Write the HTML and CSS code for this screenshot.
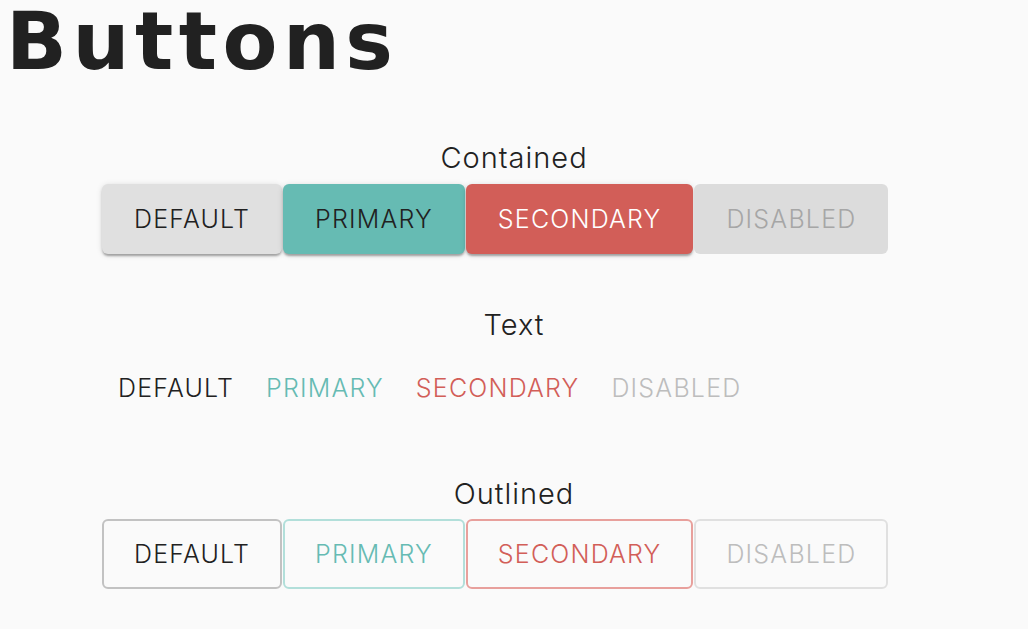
FILE: index.html
```html
<!DOCTYPE html>
<html>
<head>
<meta charset="utf-8">
<link rel="stylesheet" href="styles.css">
</head>
<body>
<h1 class="title">Buttons</h1>

<section class="group group-contained">
  <h2 class="label">Contained</h2>
  <div class="row">
    <button class="btn contained default">Default</button>
    <button class="btn contained primary">Primary</button>
    <button class="btn contained secondary">Secondary</button>
    <button class="btn contained disabled" disabled>Disabled</button>
  </div>
</section>

<section class="group group-text">
  <h2 class="label">Text</h2>
  <div class="row">
    <button class="btn text default">Default</button>
    <button class="btn text primary">Primary</button>
    <button class="btn text secondary">Secondary</button>
    <button class="btn text disabled" disabled>Disabled</button>
  </div>
</section>

<section class="group group-outlined">
  <h2 class="label">Outlined</h2>
  <div class="row">
    <button class="btn outlined default">Default</button>
    <button class="btn outlined primary">Primary</button>
    <button class="btn outlined secondary">Secondary</button>
    <button class="btn outlined disabled" disabled>Disabled</button>
  </div>
</section>
</body>
</html>
```

FILE: styles.css
```css
html, body {
  margin: 0;
  padding: 0;
  background: #fafafa;
  color: #212121;
  font-family: "Inter", "Liberation Sans", sans-serif;
}

.title {
  margin: 0;
  padding: 0 0 0 6px;
  font-family: "DejaVu Sans", sans-serif;
  font-weight: bold;
  font-size: 80px;
  line-height: 84px;
  letter-spacing: 5.5px;
  color: #212121;
}

.group {
  display: flex;
  flex-direction: column;
}

.label {
  margin: 0;
  text-align: center;
  font-weight: 300;
  font-size: 29px;
  line-height: 32px;
  letter-spacing: 1px;
  color: #212121;
}

.group-contained { margin-top: 58px; }
.group-text { margin-top: 55px; }
.group-outlined { margin-top: 70px; }

.row {
  display: flex;
  padding-left: 102px;
}

.btn {
  font-family: "Inter", "Liberation Sans", sans-serif;
  font-weight: 300;
  font-size: 25px;
  letter-spacing: 1.2px;
  text-transform: uppercase;
  border: 0;
  background: transparent;
  margin: 0;
  cursor: pointer;
}

.contained, .outlined {
  height: 70px;
  padding: 0 32px;
  border-radius: 6px;
  margin-right: 1px;
}

.group-contained .row { margin-top: 10px; }
.group-outlined .row { margin-top: 9px; }

.contained.default {
  background: #e0e0e0;
  color: #212121;
  box-shadow: 0 3px 2px -1px rgba(0,0,0,0.2), 0 2px 3px 0 rgba(0,0,0,0.14), 0 1px 6px 0 rgba(0,0,0,0.12);
}
.contained.primary {
  background: #66bbb3;
  color: #212121;
  box-shadow: 0 3px 2px -1px rgba(0,0,0,0.2), 0 2px 3px 0 rgba(0,0,0,0.14), 0 1px 6px 0 rgba(0,0,0,0.12);
}
.contained.secondary {
  background: #d25e58;
  color: #ffffff;
  box-shadow: 0 3px 2px -1px rgba(0,0,0,0.2), 0 2px 3px 0 rgba(0,0,0,0.14), 0 1px 6px 0 rgba(0,0,0,0.12);
}
.contained.disabled {
  background: #dcdcdc;
  color: #a6a6a6;
  cursor: default;
}

.text {
  height: 40px;
  padding: 0 16px;
}
.group-text .row { margin-top: 27px; }
.text.default { color: #212121; }
.text.primary { color: #66bbb3; }
.text.secondary { color: #d25e58; }
.text.disabled { color: #bdbdbd; }

.outlined {
  background: transparent;
  border: 2px solid;
  padding: 0 30px;
}
.outlined.default { border-color: #c2c2c2; color: #212121; }
.outlined.primary { border-color: #b2dfda; color: #66bbb3; }
.outlined.secondary { border-color: #e8a09c; color: #d25e58; }
.outlined.disabled { border-color: #e0e0e0; color: #bdbdbd; }
```
